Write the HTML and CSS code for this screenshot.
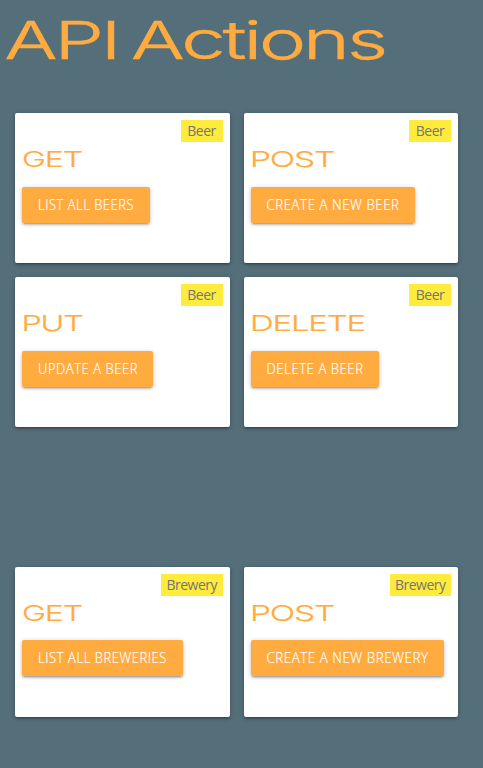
FILE: index.html
```html
<!DOCTYPE html>
<html lang="en">
<head>
<meta charset="utf-8">
<title>API Actions</title>
<link rel="stylesheet" href="styles.css">
</head>
<body>
<h1><svg class="title" width="400" height="80"><text x="4.5" y="59" textLength="114" lengthAdjust="spacingAndGlyphs">API</text><text x="131" y="59" textLength="254" lengthAdjust="spacingAndGlyphs">Actions</text></svg></h1>
<main>
<section class="cards">
<article class="card"><span class="badge">Beer</span><h2><svg class="verb" width="200" height="24"><text y="20" textLength="60" lengthAdjust="spacingAndGlyphs">GET</text></svg></h2><a class="btn"><svg class="label" width="96" height="36"><text y="23" textLength="96" lengthAdjust="spacingAndGlyphs">LIST ALL BEERS</text></svg></a></article>
<article class="card"><span class="badge">Beer</span><h2><svg class="verb" width="200" height="24"><text x="-1" y="20" textLength="84" lengthAdjust="spacingAndGlyphs">POST</text></svg></h2><a class="btn"><svg class="label" width="132" height="36"><text x="-.5" y="23" textLength="133" lengthAdjust="spacingAndGlyphs">CREATE A NEW BEER</text></svg></a></article>
<article class="card"><span class="badge">Beer</span><h2><svg class="verb" width="200" height="24"><text x="-.5" y="20" textLength="61" lengthAdjust="spacingAndGlyphs">PUT</text></svg></h2><a class="btn"><svg class="label" width="99" height="36"><text y="23" textLength="100" lengthAdjust="spacingAndGlyphs">UPDATE A BEER</text></svg></a></article>
<article class="card"><span class="badge">Beer</span><h2><svg class="verb" width="200" height="24"><text x="-1" y="20" textLength="115" lengthAdjust="spacingAndGlyphs">DELETE</text></svg></h2><a class="btn"><svg class="label" width="96" height="36"><text x="-.5" y="23" textLength="97" lengthAdjust="spacingAndGlyphs">DELETE A BEER</text></svg></a></article>
</section>
<section class="cards breweries">
<article class="card"><span class="badge brewery">Brewery</span><h2><svg class="verb" width="200" height="24"><text y="20" textLength="60" lengthAdjust="spacingAndGlyphs">GET</text></svg></h2><a class="btn"><svg class="label" width="129" height="36"><text y="23" textLength="129" lengthAdjust="spacingAndGlyphs">LIST ALL BREWERIES</text></svg></a></article>
<article class="card"><span class="badge brewery">Brewery</span><h2><svg class="verb" width="200" height="24"><text x="-1" y="20" textLength="84" lengthAdjust="spacingAndGlyphs">POST</text></svg></h2><a class="btn"><svg class="label" width="161" height="36"><text x="-.5" y="23" textLength="162" lengthAdjust="spacingAndGlyphs">CREATE A NEW BREWERY</text></svg></a></article>
</section>
</main>
</body>
</html>
```
FILE: styles.css
```css
* { box-sizing: border-box; }
body { margin: 0; height: 768px; overflow: hidden; background: #546e7a; font-family: "Open Sans", "Noto Sans", sans-serif; }
h1, h2 { margin: 0; }
svg { display: block; overflow: visible; fill: #ffab40; font-family: Inter, sans-serif; }
.title { font-size: 52.5px; font-weight: 300; letter-spacing: -2px; stroke: #ffab40; stroke-width: .6px; }
.verb { font-size: 22px; font-weight: 300; letter-spacing: -.8px; stroke: #ffab40; stroke-width: .2px; }
.label { fill: #fff; stroke: #fff; stroke-width: .2px; font-family: "Open Sans", sans-serif; font-size: 14px; font-weight: 300; letter-spacing: .6px; }
main { padding: 33px 25px 0 15px; }
.cards { display: grid; grid-template-columns: repeat(2, minmax(0, 1fr)); gap: 14px; }
.breweries { margin-top: 140px; }
.card { display: flex; flex-direction: column; align-items: flex-start; height: 150px; padding: 7px; background: #fff; border-radius: 2px; box-shadow: 0 2px 2px rgba(0,0,0,.14), 0 3px 1px -2px rgba(0,0,0,.12), 0 1px 5px rgba(0,0,0,.2); }
.badge { align-self: flex-end; width: 42px; height: 22px; background: #ffeb3b; color: #757575; font-size: 14px; line-height: 22px; letter-spacing: -.5px; text-align: center; white-space: nowrap; }
.badge.brewery { width: 61.5px; }
h2 { margin-top: 5px; }
.btn { margin-top: 16px; height: 36px; padding: 0 16px; border-radius: 2px; background: #ffab40; box-shadow: 0 2px 2px rgba(0,0,0,.14), 0 3px 1px -2px rgba(0,0,0,.12), 0 1px 5px rgba(0,0,0,.2); }
.breweries .btn { margin-top: 15px; }
```
